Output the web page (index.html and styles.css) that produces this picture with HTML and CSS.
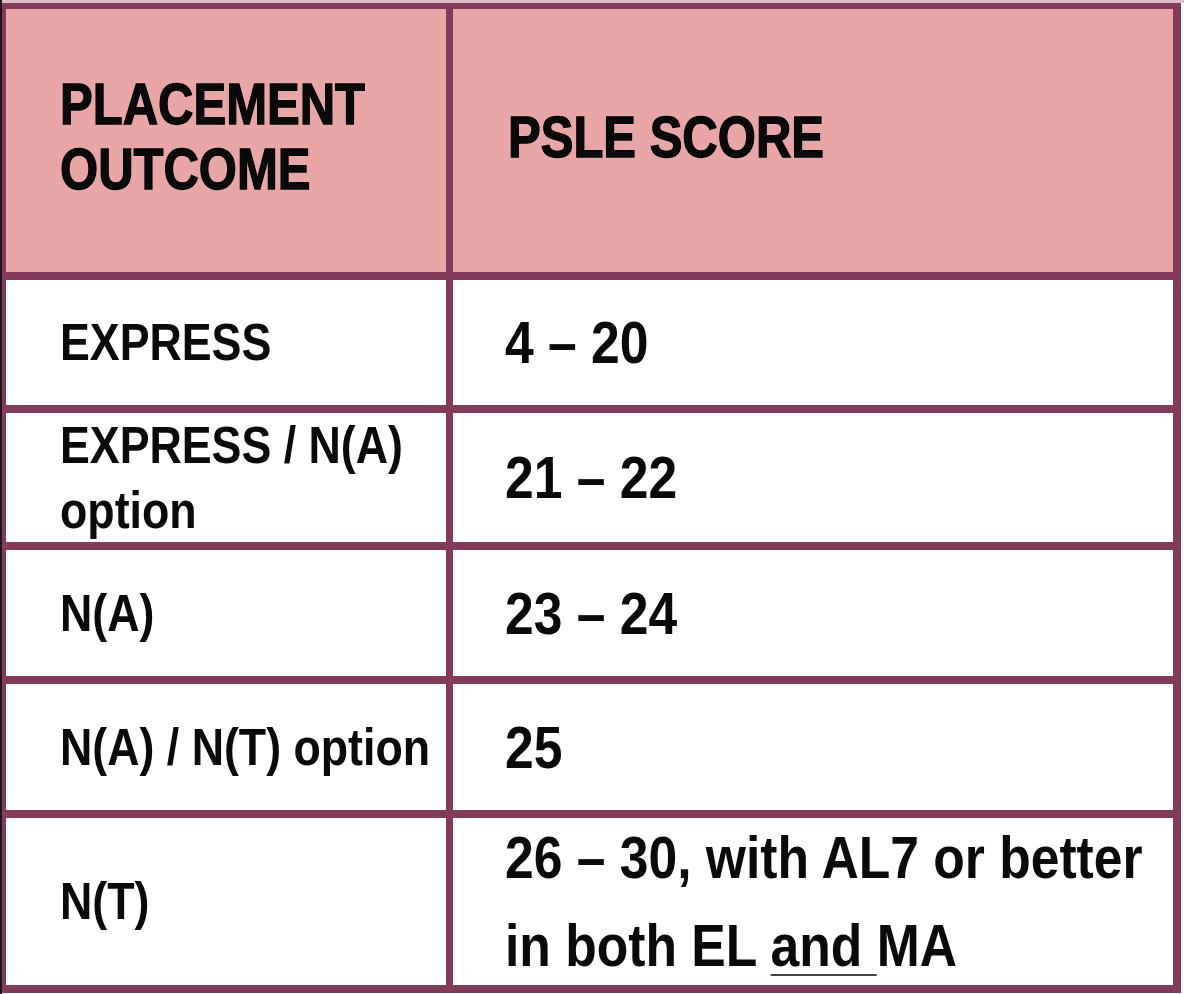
FILE: index.html
```html
<!DOCTYPE html>
<html lang="en">
<head>
<meta charset="utf-8">
<title>Placement Outcome and PSLE Score</title>
<link rel="stylesheet" href="styles.css">
</head>
<body>
<div class="page">
  <div class="table">
    <div class="cell head left"><span class="t">PLACEMENT<br>OUTCOME</span></div>
    <div class="cell head right"><span class="t">PSLE SCORE</span></div>

    <div class="cell left"><span class="t">EXPRESS</span></div>
    <div class="cell right"><span class="t">4 – 20</span></div>

    <div class="cell left"><span class="t">EXPRESS / N(A)<br>option</span></div>
    <div class="cell right"><span class="t">21 – 22</span></div>

    <div class="cell left"><span class="t">N(A)</span></div>
    <div class="cell right"><span class="t">23 – 24</span></div>

    <div class="cell left"><span class="t">N(A) / N(T) option</span></div>
    <div class="cell right"><span class="t">25</span></div>

    <div class="cell left"><span class="t">N(T)</span></div>
    <div class="cell right tall"><span class="t">26 – 30, with AL7 or better<br>in both EL <u class="ul">and </u>MA</span></div>
  </div>
</div>
</body>
</html>
```

FILE: styles.css
```css
html, body {
  margin: 0;
  padding: 0;
  background: #ffffff;
}

.page {
  width: 1184px;
  height: 994px;
  border-left: 2px solid #1e1519;
  padding-top: 3px;
  box-sizing: border-box;
  background: linear-gradient(#d9bcc6 0, #d9bcc6 3px, #ffffff 3px);
}

.table {
  display: grid;
  grid-template-columns: 440px 720px;
  grid-template-rows: 263px 125px 129px 126px 126px 167px;
  column-gap: 7px;
  row-gap: 8px;
  padding: 6px 8px 8px 4px;
  width: fit-content;
  background: #843a5a;
}

.cell {
  display: flex;
  align-items: center;
  background: #ffffff;
  color: #0a0a0a;
  font-family: "Liberation Sans", Arial, sans-serif;
  font-weight: 700;
  white-space: nowrap;
  overflow: visible;
}

.left {
  padding-left: 54px;
  font-size: 52px;
  line-height: 65px;
}

.right {
  padding-left: 52px;
  font-size: 60px;
  line-height: 65px;
}

.head {
  background: #e8a6a7;
  padding-bottom: 7px;
  font-size: 57px;
  line-height: 65px;
  -webkit-text-stroke: 1.3px #000000;
}

.head.right {
  padding-left: 55px;
}

.tall {
  line-height: 88px;
}

.t {
  display: inline-block;
  transform: scaleX(0.86);
  transform-origin: 0 50%;
}

.ul {
  text-decoration: underline;
  text-decoration-thickness: 2px;
  text-underline-offset: 8px;
  text-decoration-color: #444444;
}
```
